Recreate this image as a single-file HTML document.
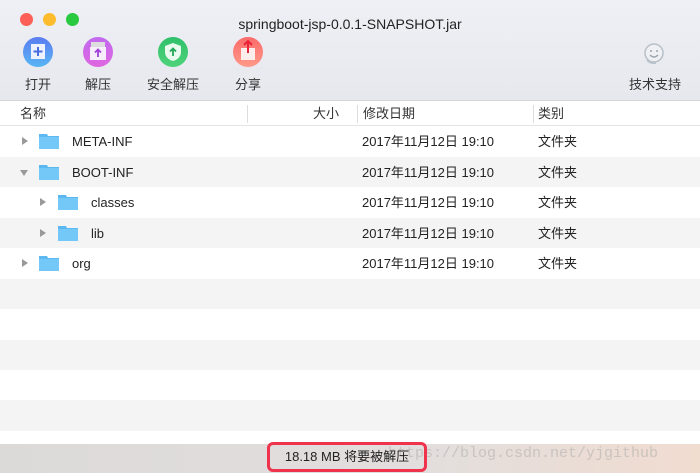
<!DOCTYPE html>
<html><head><meta charset="utf-8"><style>
*{margin:0;padding:0;box-sizing:border-box}
body{width:700px;height:473px;overflow:hidden;font-family:"Liberation Sans","Noto Sans CJK SC",sans-serif;font-size:13px;color:#222;background:#fff;position:relative}
.tb{position:absolute;left:0;top:0;width:700px;height:101px;background:linear-gradient(#eef0f5,#e6e8ed);border-bottom:1px solid #d6d6d6}
.dot{position:absolute;top:13px;width:13px;height:13px;border-radius:50%}
.title{position:absolute;top:16px;left:0;width:700px;text-align:center;font-size:14px;line-height:16px;color:#222}
.lbl{position:absolute;top:74px;font-size:13px;color:#333;transform:translateX(-50%);white-space:nowrap}
.ic{position:absolute;top:37px}
.hdr{position:absolute;top:101px;left:0;width:700px;height:25px;background:#fff;border-bottom:1px solid #e4e4e4;font-size:13px;color:#333}
.hdr span{position:absolute;top:5px;line-height:16px}
.div{position:absolute;top:4px;width:1px;height:18px;background:#ddd}
.row{position:absolute;left:0;width:700px;height:30.5px}
.g{background:#f4f4f4}
.row .n,.row .d,.row .k{position:absolute;top:8px;font-size:13px;line-height:16px}
.d{left:362px}.k{left:538px}
.tri{position:absolute;top:11px;width:0;height:0;border-top:4px solid transparent;border-bottom:4px solid transparent;border-left:6px solid #999}
.trid{position:absolute;top:13px;width:0;height:0;border-left:4px solid transparent;border-right:4px solid transparent;border-top:6px solid #999}
.f{position:absolute;top:7px;width:20px;height:16px}
.status{position:absolute;left:0;top:444px;width:700px;height:29px;background:linear-gradient(90deg,#dcdad9,#e2dedd 60%,#f1dcd0)}
.box{position:absolute;left:267px;top:442px;width:160px;height:30px;border:3px solid #f0334d;border-radius:6px;text-align:center;line-height:24px;font-size:13px;color:#222}
.wm{position:absolute;left:388px;top:445px;font-family:"Liberation Mono",monospace;font-size:15px;color:rgba(170,170,170,.5)}
</style></head><body>
<div class="tb">
<div class="dot" style="left:20px;background:#fc5f57"></div>
<div class="dot" style="left:43px;background:#fdbc2e"></div>
<div class="dot" style="left:66px;background:#29c940"></div>
<div class="title">springboot-jsp-0.0.1-SNAPSHOT.jar</div>
<svg class="ic" style="left:23px" width="30" height="30" viewBox="0 0 30 30"><defs><linearGradient id="a" x1="0" y1="0" x2="0" y2="1"><stop offset="0" stop-color="#5b7cf0"/><stop offset="1" stop-color="#58b6f5"/></linearGradient></defs><circle cx="15" cy="15" r="15" fill="url(#a)"/><rect x="8" y="7" width="14" height="15" fill="#eef2ff"/><path d="M15 10v9M10.5 14.5h9" stroke="#4a6ee0" stroke-width="2"/></svg>
<svg class="ic" style="left:83px" width="30" height="30" viewBox="0 0 30 30"><defs><linearGradient id="b" x1="0" y1="0" x2="0" y2="1"><stop offset="0" stop-color="#c06af0"/><stop offset="1" stop-color="#e066e0"/></linearGradient></defs><circle cx="15" cy="15" r="15" fill="url(#b)"/><rect x="8" y="5" width="14" height="6" fill="#ddd"/><rect x="7" y="10" width="16" height="13" fill="#f6eefc"/><path d="M15 20v-7M12 15.5l3-3 3 3" stroke="#a040d8" stroke-width="1.8" fill="none"/></svg>
<svg class="ic" style="left:158px" width="30" height="30" viewBox="0 0 30 30"><defs><linearGradient id="c" x1="0" y1="0" x2="0" y2="1"><stop offset="0" stop-color="#2fbf6a"/><stop offset="1" stop-color="#4fd37a"/></linearGradient></defs><circle cx="15" cy="15" r="15" fill="url(#c)"/><path d="M15 6l8 3v6c0 5-4 8-8 9-4-1-8-4-8-9V9z" fill="#e9faee"/><path d="M15 19v-7M12 14.5l3-3 3 3" stroke="#22a85a" stroke-width="1.8" fill="none"/></svg>
<svg class="ic" style="left:233px" width="30" height="30" viewBox="0 0 30 30"><defs><linearGradient id="d" x1="0" y1="0" x2="0" y2="1"><stop offset="0" stop-color="#fb6a6a"/><stop offset="1" stop-color="#ff9a8a"/></linearGradient></defs><circle cx="15" cy="15" r="15" fill="url(#d)"/><rect x="8" y="11" width="14" height="12" fill="#fdeeee"/><path d="M15 16V4M11 8l4-4 4 4" stroke="#e8223a" stroke-width="2" fill="none"/></svg>
<svg class="ic" style="left:641px;top:41px" width="26" height="26" viewBox="0 0 26 26"><circle cx="13" cy="12" r="9" fill="#eef0f3" stroke="#b8c0c8" stroke-width="1.5"/><circle cx="10" cy="10" r="1" fill="#9aa4ae"/><circle cx="16" cy="10" r="1" fill="#9aa4ae"/><path d="M9 14q4 4 8 0" stroke="#9aa4ae" stroke-width="1.3" fill="none"/><path d="M6 19q3 4 9 3" stroke="#b8c0c8" stroke-width="1.5" fill="none"/></svg>
<div class="lbl" style="left:38px">打开</div>
<div class="lbl" style="left:98px">解压</div>
<div class="lbl" style="left:173px">安全解压</div>
<div class="lbl" style="left:248px">分享</div>
<div class="lbl" style="left:655px">技术支持</div>
</div>
<div class="hdr">
<span style="left:20px">名称</span>
<div class="div" style="left:247px"></div>
<span style="left:313px">大小</span>
<div class="div" style="left:357px"></div>
<span style="left:363px">修改日期</span>
<div class="div" style="left:533px"></div>
<span style="left:538px">类别</span>
</div>
<svg width="0" height="0" style="position:absolute"><defs><symbol id="fo" viewBox="0 0 20 16"><path d="M0 1h8l1 2h11v13H0z" fill="#5cb8f0"/><rect x="0" y="4" width="20" height="12" fill="#74c8f7"/></symbol></defs></svg>
<div class="row" style="top:126px"><div class="tri" style="left:22px"></div><svg class="f" style="left:39px"><use href="#fo"/></svg><span class="n" style="left:72px">META-INF</span><span class="d">2017年11月12日 19:10</span><span class="k">文件夹</span></div>
<div class="row g" style="top:156.5px"><div class="trid" style="left:20px"></div><svg class="f" style="left:39px"><use href="#fo"/></svg><span class="n" style="left:72px">BOOT-INF</span><span class="d">2017年11月12日 19:10</span><span class="k">文件夹</span></div>
<div class="row" style="top:187px"><div class="tri" style="left:40px"></div><svg class="f" style="left:58px"><use href="#fo"/></svg><span class="n" style="left:91px">classes</span><span class="d">2017年11月12日 19:10</span><span class="k">文件夹</span></div>
<div class="row g" style="top:217.5px"><div class="tri" style="left:40px"></div><svg class="f" style="left:58px"><use href="#fo"/></svg><span class="n" style="left:91px">lib</span><span class="d">2017年11月12日 19:10</span><span class="k">文件夹</span></div>
<div class="row" style="top:248px"><div class="tri" style="left:22px"></div><svg class="f" style="left:39px"><use href="#fo"/></svg><span class="n" style="left:72px">org</span><span class="d">2017年11月12日 19:10</span><span class="k">文件夹</span></div>
<div class="row g" style="top:278.5px"></div>
<div class="row g" style="top:339.5px"></div>
<div class="row g" style="top:400px"></div>
<div class="status"></div>
<div class="wm">https://blog.csdn.net/yjgithub</div>
<div class="box">18.18 MB 将要被解压</div>
</body></html>
